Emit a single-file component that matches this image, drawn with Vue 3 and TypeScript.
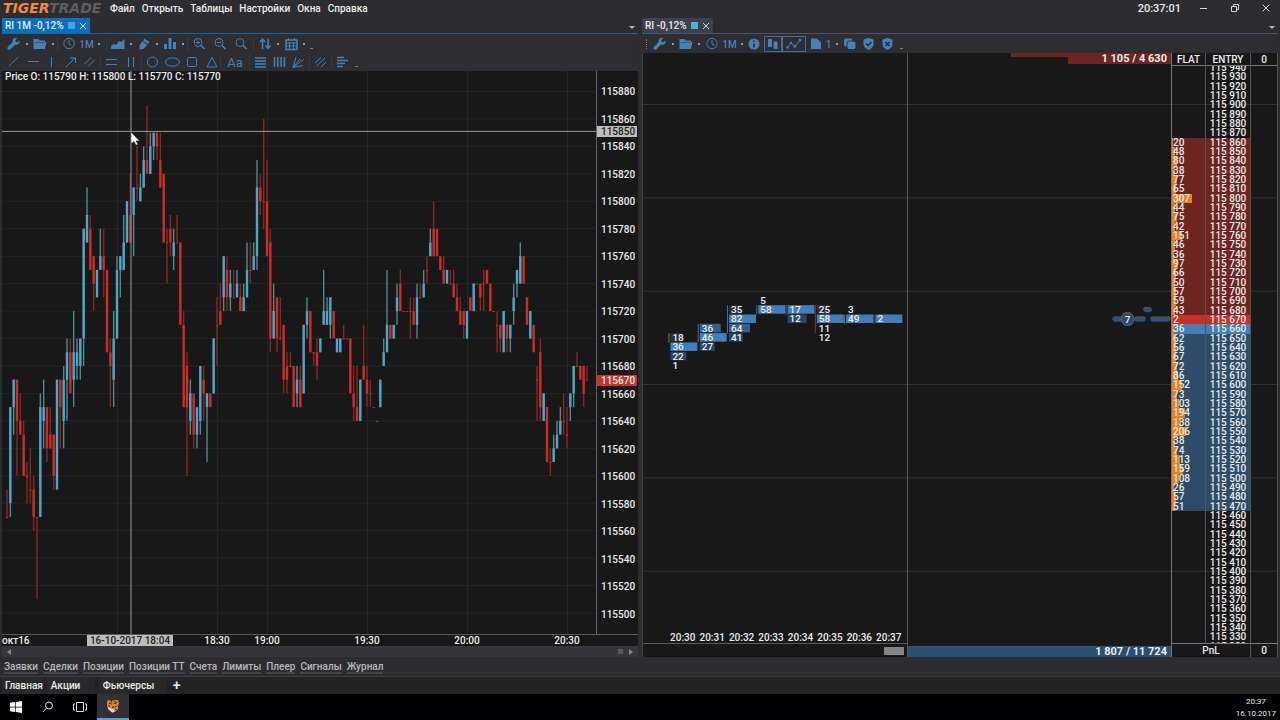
<script setup lang="ts">
type Candle = [number, number, number, number, 'u' | 'd']

interface Tool {
  icon?: string
  label?: string
  text?: string
  drop?: boolean
  sep?: boolean
  kind?: string
}

const menu = ['Файл', 'Открыть', 'Таблицы', 'Настройки', 'Окна', 'Справка']
const panels = ['Заявки', 'Сделки', 'Позиции', 'Позиции ТТ', 'Счета', 'Лимиты', 'Плеер', 'Сигналы', 'Журнал']

const icons: Record<string, string> = {
  wrench: '<path class="f" d="M13.500 4.200l-2 2-1.800-.4-.4-1.800 2-2C9.400 1.300 7.300 2 6.700 3.800c-.3.8-.2 1.500 0 2.200L2 10.800c-.8.800-.8 1.800-.1 2.500.8.8 1.800.7 2.500-.1L9.200 8.500c2.500.9 5.200-1.300 4.300-4.300z"/>',
  folder: '<path class="f" d="M1.500 13V3h5l1 1.500H13V6h1.500L13 13z"/><path d="M3 6.500h10" style="stroke:#2d2d32;stroke-width:.5"/>',
  clock: '<circle cx="8" cy="7.500" r="5.200"/><path d="M8 4v4l2.500 1.500"/>',
  area: '<path class="f" d="M1 13V9.500l3-1.500 2 1 3-4 2 1 3.500-3V13z"/>',
  pencil: '<path class="f" d="M8.500 2.500l5 3.500-1.500 2-5-3.500zM6.300 5.300l5 3.500L7.500 13l-4 .5.3-4.500z"/>',
  bars: '<path class="f" d="M2 8h3v5H2zM6.500 2h3v11h-3zM11 6h3v7h-3z"/>',
  zoomin: '<circle cx="7" cy="6.500" r="4"/><path class="b" d="M10 9.500l3.500 3.500"/><path d="M5 6.500h4M7 4.500v4"/>',
  zoomout: '<circle cx="7" cy="6.500" r="4"/><path class="b" d="M10 9.500l3.500 3.500"/><path d="M5 6.500h4"/>',
  zoom: '<circle cx="7" cy="6.500" r="4"/><path class="b" d="M10 9.500l3.500 3.500"/>',
  arrows: '<path class="b" d="M5.500 13V3.500M3 6l2.500-3L8 6M11 2.500V12M8.500 9.500L11 12.500l2.500-3"/>',
  calendar: '<path class="b" d="M3 4h11v9.500H3z"/><path d="M3 7h11M3 10h11M6.500 6v7M10.500 6v7M5.500 2v2M11.500 2v2"/>',
  line: '<path d="M3 12L12.500 3"/>',
  hline: '<path d="M3 7.500h11"/>',
  vline: '<path d="M7.500 3v10"/>',
  ray: '<path d="M3 13l9-9M7 4h5.500v5"/>',
  channel: '<path d="M2.500 10L9 3.500M6 12.500l7-7"/>',
  hpair: '<path d="M2 5.500h11M2 10.500h11"/>',
  vpair: '<path d="M5.500 3v10M10.500 3v10"/>',
  circle: '<circle cx="7.500" cy="8" r="5"/>',
  ellipse: '<ellipse cx="8.500" cy="8" rx="7" ry="4.200"/>',
  square: '<rect x="4.500" y="3.500" width="9" height="9" rx="1"/>',
  triangle: '<path d="M10 3.500l5 9.500H5z"/>',
  hlines: '<path class="b" d="M2 4h11M2 7h11M2 10h11M2 13h11"/>',
  vlines: '<path class="b" d="M2.500 3v10M5.800 3v10M9.100 3v10M12.400 3v10"/>',
  fan: '<path d="M2 13.500L5 3M2 13.500L9 5M2 13.500L12.500 5.500M2 13.500l10-2"/>',
  slashes: '<path d="M2 9l6-5.500M3.500 12L12 4M8 13l5-5"/>',
  align: '<path class="b" d="M2 3.500h7M2 6.500h11M2 9.500h8M2 12.500h6"/>',
  info: '<circle class="f" cx="7" cy="8" r="5.500"/><path class="k" d="M7 7.500v4M7 4.500v1.500"/>',
  clusters: '<path class="f" d="M3 3h4v8H3zM8.500 5.500h4V13h-4z"/>',
  polyline: '<path d="M1 12l4-5 4 3.500L14.500 3.500"/><circle class="f" cx="1.500" cy="11.500" r="1.300"/><circle class="f" cx="5" cy="7" r="1.300"/><circle class="f" cx="9" cy="10.500" r="1.300"/><circle class="f" cx="14" cy="4" r="1.300"/>',
  page: '<path class="f" d="M3 2.500h6l4 4V13H3z"/>',
  copy: '<rect class="f" x="2" y="2.500" width="8.500" height="8" rx="2"/><rect class="f e" x="5" y="5" width="9" height="8.500" rx="2"/>',
  shield: '<path class="f" d="M7.500 2l5 1.500V8c0 3-2 4.500-5 6-3-1.500-5-3-5-6V3.500z"/><path class="k" d="M5 7.500l2 2 3.500-3.500"/>',
  shieldx: '<path class="f" d="M7.500 2l5 1.500V8c0 3-2 4.500-5 6-3-1.500-5-3-5-6V3.500z"/><path class="k" d="M5.500 6l4 4M9.500 6l-4 4"/>',
}

const mainTools: Tool[] = [
  { icon: 'wrench', label: 'Параметры', drop: true },
  { icon: 'folder', label: 'Шаблоны', drop: true },
  { sep: true },
  { icon: 'clock', label: 'Период', text: '1M', drop: true, kind: 'period' },
  { sep: true },
  { icon: 'area', label: 'Тип графика', drop: true },
  { icon: 'pencil', label: 'Рисование', drop: true },
  { icon: 'bars', label: 'Индикаторы', drop: true },
  { sep: true },
  { icon: 'zoomin', label: 'Увеличить', kind: 'wide' },
  { icon: 'zoomout', label: 'Уменьшить', kind: 'wide' },
  { icon: 'zoom', label: 'Масштаб', kind: 'wide' },
  { sep: true },
  { icon: 'arrows', label: 'Шкала', drop: true },
  { icon: 'calendar', label: 'Календарь', drop: true },
]
const drawTools: Tool[] = [
  { icon: 'line', label: 'Линия' },
  { icon: 'hline', label: 'Горизонтальная линия' },
  { icon: 'vline', label: 'Вертикальная линия' },
  { icon: 'ray', label: 'Луч' },
  { icon: 'channel', label: 'Канал' },
  { sep: true },
  { icon: 'hpair', label: 'Горизонтальный диапазон' },
  { icon: 'vpair', label: 'Вертикальный диапазон' },
  { sep: true },
  { icon: 'circle', label: 'Круг' },
  { icon: 'ellipse', label: 'Эллипс' },
  { icon: 'square', label: 'Прямоугольник' },
  { icon: 'triangle', label: 'Треугольник' },
  { sep: true },
  { text: 'Aa', label: 'Текст', kind: 'letters' },
  { sep: true },
  { icon: 'hlines', label: 'Уровни' },
  { icon: 'vlines', label: 'Временные зоны' },
  { icon: 'fan', label: 'Веер' },
  { sep: true },
  { icon: 'slashes', label: 'Вилы' },
  { sep: true },
  { icon: 'align', label: 'Профиль' },
]
const domTools: Tool[] = [
  { icon: 'wrench', label: 'Параметры', drop: true },
  { icon: 'folder', label: 'Шаблоны', drop: true },
  { icon: 'clock', label: 'Период', text: '1M', drop: true, kind: 'period' },
  { icon: 'info', label: 'Информация' },
  { icon: 'clusters', label: 'Кластеры', kind: 'pressed' },
  { icon: 'polyline', label: 'Тики', kind: 'pressed wide' },
  { icon: 'page', label: 'Объём', text: '1', drop: true, kind: 'tight' },
  { icon: 'copy', label: 'Копировать' },
  { icon: 'shield', label: 'Защита' },
  { icon: 'shieldx', label: 'Снять защиту' },
]

/* high, body top, body bottom, low: steps of 10 points below 115880 */
const candles: Candle[] = [
  [29, 31, 31, 31, 'd'], [23, 23, 30, 31, 'u'], [21, 21, 23, 25, 'u'], [21, 21, 24, 28, 'd'], [22, 24, 25, 25, 'd'],
  [24, 25, 28, 28, 'd'], [27, 28, 28, 30, 'd'], [26, 29, 29, 30, 'd'], [28, 29, 31, 32, 'd'], [31, 31, 31, 37, 'd'],
  [22, 23, 31, 31, 'u'], [21, 23, 24, 26, 'u'], [23, 23, 26, 27, 'd'], [23, 25, 26, 26, 'd'], [25, 25, 28, 29, 'd'],
  [21, 21, 29, 29, 'u'], [21, 21, 23, 26, 'd'], [20, 21, 24, 26, 'u'], [18, 19, 21, 24, 'u'], [18, 19, 22, 22, 'd'],
  [16, 19, 21, 23, 'u'], [18, 19, 20, 21, 'u'], [18, 18, 20, 21, 'u'], [10, 10, 18, 20, 'u'], [7, 9, 11, 11, 'u'],
  [9, 10, 13, 13, 'd'], [12, 12, 14, 16, 'd'], [13, 13, 15, 15, 'u'], [10, 12, 13, 13, 'u'], [10, 12, 13, 15, 'd'],
  [13, 13, 19, 19, 'd'], [18, 19, 20, 23, 'd'], [16, 18, 21, 23, 'u'], [12, 13, 18, 18, 'u'], [12, 12, 13, 15, 'u'],
  [9, 11, 13, 13, 'u'], [8, 8, 11, 11, 'u'], [6, 9, 11, 11, 'd'], [7, 7, 9, 12, 'u'], [4, 7, 7, 8, 'd'],
  [6, 7, 8, 8, 'u'], [4, 5, 7, 7, 'u'], [1, 5, 6, 6, 'd'], [3, 4, 6, 6, 'u'], [3, 3, 4, 5, 'u'],
  [3, 3, 4, 5, 'd'], [3, 5, 7, 7, 'd'], [6, 6, 11, 11, 'd'], [10, 11, 11, 14, 'd'], [9, 10, 11, 12, 'd'],
  [10, 11, 12, 13, 'u'], [9, 11, 11, 11, 'd'], [11, 11, 17, 17, 'd'], [16, 17, 23, 23, 'd'], [19, 20, 23, 28, 'd'],
  [21, 22, 24, 25, 'u'], [22, 22, 25, 26, 'd'], [23, 23, 25, 26, 'u'], [20, 20, 24, 25, 'u'], [20, 21, 22, 24, 'd'],
  [22, 22, 23, 27, 'u'], [22, 22, 23, 23, 'd'], [18, 18, 22, 22, 'u'], [15, 17, 17, 20, 'd'], [14, 16, 17, 17, 'd'],
  [12, 12, 15, 16, 'u'], [12, 13, 15, 16, 'd'], [13, 14, 15, 16, 'u'], [13, 15, 15, 15, 'd'], [13, 14, 15, 15, 'u'],
  [14, 15, 16, 16, 'd'], [14, 15, 16, 16, 'u'], [11, 13, 15, 15, 'u'], [11, 13, 13, 14, 'd'], [11, 12, 13, 13, 'u'],
  [5, 7, 12, 13, 'u'], [6, 7, 8, 9, 'd'], [2, 8, 8, 10, 'd'], [5, 8, 12, 12, 'd'], [10, 11, 18, 19, 'd'],
  [14, 16, 18, 18, 'u'], [15, 15, 18, 19, 'd'], [15, 18, 18, 18, 'd'], [17, 17, 21, 22, 'd'], [19, 20, 21, 22, 'd'],
  [19, 20, 20, 20, 'd'], [20, 20, 23, 23, 'd'], [20, 21, 22, 23, 'u'], [20, 21, 23, 23, 'd'], [17, 17, 22, 22, 'u'],
  [15, 16, 17, 18, 'u'], [16, 16, 19, 19, 'd'], [19, 19, 19, 20, 'd'], [18, 19, 20, 21, 'd'], [18, 18, 19, 19, 'u'],
  [13, 16, 17, 17, 'u'], [15, 16, 17, 17, 'u'], [15, 15, 17, 18, 'u'], [16, 16, 18, 18, 'd'], [18, 18, 19, 19, 'u'],
  [18, 18, 19, 19, 'u'], [17, 18, 18, 18, 'd'], [18, 18, 18, 18, 'd'], [18, 18, 22, 22, 'd'], [20, 22, 23, 24, 'd'],
  [20, 23, 24, 24, 'd'], [21, 21, 24, 24, 'u'], [17, 20, 21, 21, 'd'], [20, 21, 22, 23, 'd'], [21, 22, 22, 23, 'd'],
  [23, 23, 23, 23, 'd'], [24, 24, 24, 24, 'd'], [21, 21, 23, 23, 'u'], [18, 19, 20, 20, 'u'], [13, 17, 19, 19, 'u'],
  [17, 17, 18, 18, 'd'], [17, 17, 18, 18, 'u'], [14, 15, 16, 17, 'u'], [13, 14, 16, 16, 'd'], [16, 16, 16, 16, 'd'],
  [16, 16, 16, 16, 'd'], [15, 16, 16, 18, 'd'], [15, 16, 17, 17, 'd'], [14, 15, 17, 18, 'u'], [14, 15, 15, 15, 'd'],
  [13, 14, 15, 15, 'u'], [12, 13, 13, 14, 'd'], [10, 11, 12, 12, 'u'], [8, 10, 12, 12, 'd'], [10, 10, 12, 12, 'd'],
  [12, 12, 13, 13, 'd'], [12, 13, 14, 14, 'd'], [13, 13, 14, 14, 'u'], [13, 14, 14, 14, 'd'], [13, 14, 15, 15, 'd'],
  [14, 15, 16, 16, 'd'], [15, 16, 17, 17, 'd'], [16, 16, 17, 18, 'd'], [16, 16, 18, 18, 'u'], [15, 15, 16, 16, 'd'],
  [14, 14, 16, 16, 'u'], [14, 14, 14, 14, 'd'], [14, 14, 15, 16, 'd'], [13, 14, 14, 16, 'd'], [13, 13, 14, 14, 'd'],
  [14, 14, 16, 16, 'd'], [16, 16, 16, 16, 'd'], [16, 17, 17, 19, 'd'], [17, 17, 18, 19, 'd'], [16, 16, 19, 19, 'u'],
  [17, 17, 18, 19, 'd'], [17, 17, 18, 19, 'u'], [14, 15, 16, 17, 'u'], [13, 13, 14, 15, 'u'], [11, 12, 14, 14, 'u'],
  [12, 12, 14, 14, 'd'], [15, 15, 17, 17, 'd'], [16, 16, 18, 18, 'u'], [17, 17, 19, 19, 'd'], [20, 21, 21, 24, 'd'],
  [18, 19, 23, 24, 'd'], [22, 22, 24, 24, 'u'], [23, 23, 27, 27, 'd'], [26, 27, 27, 28, 'd'], [25, 26, 27, 27, 'u'],
  [24, 25, 26, 26, 'u'], [23, 24, 25, 25, 'u'], [22, 24, 24, 25, 'd'], [23, 25, 25, 26, 'd'], [22, 22, 23, 24, 'u'],
  [20, 20, 22, 23, 'u'], [19, 20, 20, 20, 'd'], [20, 20, 21, 21, 'd'], [20, 20, 22, 23, 'd'], [20, 21, 21, 21, 'd'],
]
const cx = (i: number) => 4.5 + (i * 10) / 3
const cy = (k: number) => 20.5 + k * 13.75
const bodyHeight = (c: Candle) => Math.max(1, (c[2] - c[1]) * 13.75)

const prices = Array.from({ length: 20 }, (_, i) => 115880 - i * 20)
const ticks = [115, 215, 265, 365, 465, 565]
const times = [
  { x: 215, t: '18:30' }, { x: 265, t: '19:00' }, { x: 365, t: '19:30' }, { x: 465, t: '20:00' }, { x: 565, t: '20:30' },
]
const minutes = ['20:30', '20:31', '20:32', '20:33', '20:34', '20:35', '20:36', '20:37']

const sell = [20, 48, 80, 38, 77, 65, 307, 44, 75, 42, 151, 46, 36, 97, 66, 50, 57, 59, 43, 2]
const buy = [36, 62, 56, 67, 72, 86, 152, 73, 103, 194, 138, 206, 38, 74, 113, 159, 108, 26, 57, 51]
const depth = Array.from({ length: 63 }, (_, i) => {
  const p = 115940 - i * 10
  const s = sell[i - 8]
  const b = buy[i - 28]
  const side = p === 115670 ? 'last-sell' : p === 115660 ? 'last-buy' : s ? 'sell' : b ? 'buy' : ''
  return { price: `115 ${p - 115000}`, vol: s ?? b ?? null, side }
})

/* column, row (10-point step below 115940), volume, bar width, shade */
const clusters: [number, number, number, number, string][] = [
  [0, 29, 18, 13, 'c1'], [0, 30, 36, 27, 'c4'], [0, 31, 22, 16, 'c2'], [0, 32, 1, 0, 'c1'],
  [1, 28, 36, 21, 'c3'], [1, 29, 46, 27, 'c4'], [1, 30, 27, 15, 'c2'],
  [2, 26, 35, 12, 'c1'], [2, 27, 82, 27, 'c4'], [2, 28, 64, 21, 'c3'], [2, 29, 41, 14, 'c2'],
  [3, 25, 5, 0, 'c1'], [3, 26, 58, 27, 'c4'],
  [4, 26, 17, 27, 'c4'], [4, 27, 12, 19, 'c2'],
  [5, 26, 25, 12, 'c1'], [5, 27, 58, 27, 'c4'], [5, 28, 11, 0, 'c1'], [5, 29, 12, 0, 'c1'],
  [6, 26, 3, 0, 'c1'], [6, 27, 49, 27, 'c4'], [7, 27, 2, 27, 'c4'],
]
const ranges: [number, number, number, string][] = [
  [0, 29, 1, 'grey'], [1, 28, 2, 'blue'], [2, 26, 3, 'blue'], [3, 26, 1, 'blue'],
  [4, 26, 1, 'blue'], [5, 26, 3, 'red'], [6, 27, 1, 'blue'], [7, 27, 1, 'blue'],
]
const colX = (c: number) => 27.5 + (c * 88) / 3
const rowY = (r: number) => 10 + (r * 28) / 3
const hundreds = [0, 1, 2, 3, 4, 5].map((n) => 51.5 + (n * 280) / 3)
const deals: [number, number][] = [
  [1, 472], [1, 475], [1, 478], [1, 494], [1, 497], [1, 500], [0, 503], [0, 506],
  [1, 510], [1, 513], [1, 516], [1, 519], [1, 522], [1, 525],
]
</script>

<template>
  <div class="app">
    <header class="menubar">
      <div class="logo"><span class="tiger">TIGER</span><span class="trade">TRADE</span></div>
      <nav class="menu">
        <button v-for="m in menu" :key="m" type="button">{{ m }}</button>
      </nav>
      <time class="clock">20:37:01</time>
      <div class="winbtns">
        <button type="button" aria-label="Свернуть"><svg width="10" height="10"><path d="M1 5.500h7" /></svg></button>
        <button type="button" aria-label="Развернуть"><svg width="10" height="10"><path d="M1.500 3.500h5v5h-5zM3.500 3V1.500h5v5H7" /></svg></button>
        <button type="button" aria-label="Закрыть"><svg width="10" height="10"><path d="M1.500 1.500l7 7M8.500 1.500l-7 7" /></svg></button>
      </div>
    </header>

    <main class="panes">
      <section class="pane left">
        <div class="tabs active">
          <button class="tab" type="button">RI 1M -0,12%<i class="chip"></i><svg width="8" height="8"><path d="M1 1l6 6M7 1L1 7" /></svg></button>
          <span class="caret"></span>
        </div>
        <div class="toolbars">
          <div v-for="(row, r) in [mainTools, drawTools]" :key="r" class="toolbar">
            <template v-for="(t, i) in row" :key="i">
              <span v-if="t.sep" class="sep"></span>
              <button v-else type="button" class="tool" :class="t.kind" :aria-label="t.label">
                <svg v-if="t.icon" class="ico" width="16" height="16" v-html="icons[t.icon]"></svg>
                <span v-if="t.text" class="ttext">{{ t.text }}</span>
                <i v-if="t.drop" class="drop"></i>
              </button>
            </template>
            <span class="more"></span>
          </div>
        </div>
        <div class="chart">
          <div class="plot">
            <svg viewBox="0 0 594 564" preserveAspectRatio="none">
              <path v-for="(p, i) in prices" :key="'h' + p" class="grid" :d="`M0 ${20.5 + i * 27.5}H594`" />
              <path v-for="x in ticks" :key="'v' + x" class="grid" :d="`M${x + 0.5} 0V564`" />
              <g v-for="(c, i) in candles" :key="i" :class="c[4]">
                <rect class="wick" :x="cx(i) - 0.2" :y="cy(c[0])" width="1.4" :height="(c[3] - c[0]) * 13.75" />
                <rect class="body" :x="cx(i) - 0.7" :y="cy(c[1])" width="2.4" :height="bodyHeight(c)" />
              </g>
              <path class="cross" d="M0 60.500H594M129 0V564" />
              <path class="pointer" d="M129 61v12l3-2.500 2 4 2-1-2-3.500h3.500z" />
            </svg>
            <p class="ohlc">Price O: 115790 H: 115800 L: 115770 C: 115770</p>
          </div>
          <div class="scale">
            <span v-for="p in prices" :key="p">{{ p }}</span>
            <b class="mark hover">115850</b>
            <b class="mark last">115670</b>
          </div>
        </div>
        <div class="timeaxis">
          <span class="day">окт16</span>
          <span v-for="t in times" :key="t.t" class="time" :style="{ left: (t.x / 636) * 100 + '%' }">{{ t.t }}</span>
          <b class="stamp">16-10-2017 18:04</b>
        </div>
        <div class="scroll">
          <button type="button" aria-label="Назад"><svg width="8" height="8"><path d="M6 1v6L2 4z" /></svg></button>
          <span class="fill"></span>
          <i class="grab"></i>
          <button type="button" aria-label="Вперёд"><svg width="8" height="8"><path d="M2 1v6l4-3z" /></svg></button>
        </div>
      </section>

      <section class="pane right">
        <div class="tabs">
          <button class="tab" type="button">RI -0,12%<i class="chip"></i><svg width="8" height="8"><path d="M1 1l6 6M7 1L1 7" /></svg></button>
          <span class="caret"></span>
        </div>
        <div class="toolbars">
          <div class="toolbar">
            <span class="grip"></span>
            <button v-for="t in domTools" :key="t.label" type="button" class="tool" :class="t.kind" :aria-label="t.label">
              <svg class="ico" width="16" height="16" v-html="icons[t.icon!]"></svg>
              <span v-if="t.text" class="ttext">{{ t.text }}</span>
              <i v-if="t.drop" class="drop"></i>
            </button>
            <span class="more"></span>
          </div>
        </div>
        <div class="trading">
          <svg class="levels" viewBox="0 0 636 604" preserveAspectRatio="none">
            <path v-for="y in hundreds" :key="y" :d="`M0 ${y}H636`" />
          </svg>
          <div class="clusters">
            <svg viewBox="0 0 264 579" preserveAspectRatio="xMinYMin meet">
              <rect v-for="(g, i) in ranges" :key="'r' + i" :class="g[3]" :x="colX(g[0]) - 2" :y="rowY(g[1])" width="1" :height="(g[2] * 28) / 3" />
              <g v-for="(c, i) in clusters" :key="i">
                <rect :class="c[4]" :x="colX(c[0])" :y="rowY(c[1])" :width="c[3]" height="8.500" />
                <text :x="colX(c[0]) + 2" :y="rowY(c[1]) + 8">{{ c[2] }}</text>
              </g>
            </svg>
            <div class="minutes"><span v-for="m in minutes" :key="m">{{ m }}</span></div>
            <div class="thumbrow"><i></i></div>
          </div>
          <div class="tape">
            <div class="total ask"><i></i><b>1 105 / 4 630</b></div>
            <svg viewBox="264 0 264 579" preserveAspectRatio="xMaxYMin meet">
              <circle v-for="(d, i) in deals" :key="i" class="deal" :cx="d[1] - 0.5" :cy="d[0] ? 254.5 : 245" r="2.500" />
              <circle class="big" cx="484" cy="254.500" r="6.500" />
              <text x="484" y="258" text-anchor="middle">7</text>
            </svg>
            <div class="total bid"><b>1 807 / 11 724</b></div>
          </div>
          <table class="dom">
            <thead>
              <tr><th>FLAT</th><th>ENTRY</th><th>0</th></tr>
            </thead>
            <tbody>
              <tr v-for="d in depth" :key="d.price" :class="d.side">
                <td class="vol"><i v-if="d.vol" :style="{ width: Math.max(1, Math.round(d.vol / 15)) + 'px' }"></i><span>{{ d.vol }}</span></td>
                <td class="price">{{ d.price }}</td>
                <td class="own"></td>
              </tr>
            </tbody>
            <tfoot>
              <tr><td class="pnl">PnL</td><td>0</td></tr>
            </tfoot>
          </table>
        </div>
      </section>
    </main>

    <nav class="panels">
      <button v-for="p in panels" :key="p" type="button">{{ p }}</button>
    </nav>
    <nav class="sheets">
      <button type="button" class="first">Главная</button>
      <button type="button" class="mid">Акции</button>
      <button type="button" class="long">Фьючерсы</button>
      <button type="button" class="add" aria-label="Добавить">+</button>
    </nav>
    <footer class="taskbar">
      <button type="button" aria-label="Пуск"><svg width="12" height="12"><path class="s" d="M0 1.800l5-.8v4.700H0zM5.700.9L12 0v5.700H5.700zM0 6.400h5V11l-5-.8zM5.700 6.400H12V12l-6.300-.9z" /></svg></button>
      <button type="button" aria-label="Поиск"><svg width="12" height="12"><circle cx="7" cy="4.500" r="3.500" /><path d="M4.500 7L1 11" /></svg></button>
      <button type="button" aria-label="Представление задач"><svg width="14" height="12"><path d="M3.500 1.500h7v9h-7zM2 3H.5v6H2M12 3h1.500v6H12" /></svg></button>
      <button type="button" class="running" aria-label="Tiger Trade">
        <svg width="14" height="14">
          <path class="t1" d="M1 2l2-1 2 1 4-1h3l1 3-1 3v3l-3 3-2-1-4-2-2-3z" />
          <path class="t2" d="M1.500 7.500l2 0 1 2 3 1 1 2-1 1H6L2.500 10.500z" />
          <path class="t3" d="M3 4l2.500 1M8 4.500l3-1M5 2l1 1.500M9 2v1M2 6.500l2 1.500M11 6.500l-2 2M7.500 7l-1 2M9 10l1.500 1" />
        </svg>
      </button>
      <div class="tray"><span>20:37</span><span>16.10.2017</span></div>
    </footer>
  </div>
</template>

<style>
html, body { background: #2d2d31; }
</style>

<style scoped>
.app {
  display: flex;
  flex-direction: column;
  min-height: 100vh;
  overflow: hidden;
  background: #2d2d31;
  color: #ececec;
  font: 500 10px/11px Roboto, "Noto Sans", sans-serif;
}
.app * { box-sizing: border-box; }
button {
  margin: 0;
  padding: 0;
  border: 0;
  background: none;
  color: inherit;
  font: inherit;
  white-space: nowrap;
}
svg { display: block; flex: none; }

.menubar { display: flex; align-items: center; height: 18px; padding: 0 8px 2px 3px; }
.logo { width: 107px; font: italic bold 14px/14px "DejaVu Sans", sans-serif; }
.tiger { color: #ee8b45; }
.trade { color: #5f5f63; }
.menu { display: flex; flex: 1; gap: 7px; }
.clock { margin-right: 18px; font-size: 11px; }
.winbtns { display: flex; gap: 21px; margin-right: 1px; }
.winbtns svg, .tab svg { fill: none; stroke: #d8d8d8; stroke-width: 1; }

.panes { display: flex; flex: 1; gap: 4px; padding-right: 2px; }
.pane { display: flex; flex: 1 1 0; flex-direction: column; min-width: 0; }
.left { padding-left: 2px; }
.tabs { display: flex; justify-content: space-between; height: 16px; border-bottom: 1px solid #48546a; }
.tabs.active { border-color: #0d68a8; }
.tab { display: flex; align-items: center; gap: 2px; padding: 0 3px; background: #3c4152; border-radius: 2px 2px 0 0; }
.active .tab { background: #0b6fc0; border-radius: 0; }
.chip { width: 7px; height: 7px; margin: 0 2px; background: #4eb3d0; }
.active .chip { background: #48a0e4; }
.caret { align-self: flex-end; margin: 0 3px 4px 0; border: 3px solid transparent; border-top-color: #bbb; border-bottom: 0; }

.toolbars { padding-top: 1px; background: #2d2d32; }
.toolbar { display: flex; align-items: center; height: 18px; padding-left: 2px; color: #4482b8; }
.right .toolbar { padding-left: 0; }
.tool { display: flex; align-items: center; justify-content: center; height: 16px; }
.tool .ico { width: 16px; margin: 0 1px 0 2px; }
.tool.wide .ico { margin: 0 3px 0 2px; }
.tool.pressed { border: 1px solid #466c9c; }
.tool.pressed .ico { margin: 0; }
.tool.pressed.wide .ico { margin: 0 3px; }
.tool.tight .ico { margin-right: 0; }
.letters { width: 26px; font-size: 13px; font-weight: 400; }
.ttext { min-width: 9px; text-align: center; }
.period .ttext { width: 17px; }
.drop { width: 2px; height: 2px; margin: 0 2px 0 3px; background: #a09a90; }
.left .period .drop { margin-right: 5px; }
.sep { width: 1px; height: 14px; margin: 0 1px; background: #39393e; }
.more { width: 3px; height: 1px; margin: 8px 0 0 3px; background: #777; }
.grip { width: 2px; margin: 0 2px 0 4px; height: 10px; border-left: 1px dotted #777; }
.ico { fill: none; stroke: currentColor; stroke-width: 1; }
.ico :deep(.f) { fill: currentColor; stroke: none; }
.ico :deep(.b) { stroke-width: 1.5; }
.ico :deep(.k) { stroke: #1f2c3a; stroke-width: 1.5; }
.ico :deep(.e) { stroke: #2d2d32; }

.chart { display: flex; flex: 1; border-bottom: 1px solid #5a5a5a; background: #181818; }
.plot { position: relative; flex: 1; }
.plot svg { position: absolute; inset: 0; width: 100%; height: 100%; }
.grid { fill: none; stroke: #242424; }
.u .wick { fill: #4d8b8f; }
.u .body { fill: #4fa6c6; }
.d .wick { fill: #8c2522; }
.d .body { fill: #c92f26; }
.cross { fill: none; stroke: #9a9a9a; }
.pointer { fill: #fff; stroke: #222; stroke-width: 0.5; }
.ohlc { position: relative; margin: 0 0 0 3px; }
.scale {
  position: relative;
  display: grid;
  grid-auto-rows: 1fr;
  align-items: center;
  width: 42px;
  padding: 7px 0 6px 4px;
  border-left: 1px solid #666;
}
.mark { position: absolute; left: 0; right: 1px; padding-left: 4px; font-weight: 500; }
.hover { top: 55px; background: #bdbdbd; color: #222; }
.last { top: 304px; background: #c5332a; }
.timeaxis { position: relative; height: 11px; background: #181818; }
.time { position: absolute; transform: translateX(-50%); }
.stamp { position: absolute; left: 85px; width: 86px; background: #bdbdbd; color: #222; text-align: center; font-weight: 500; }
.scroll { display: flex; align-items: center; gap: 4px; height: 11px; padding: 0 3px; background: #36363a; }
.scroll svg { fill: #888; }
.fill { flex: 1; }
.grab { width: 5px; height: 5px; background: #5a5a5e; }

.trading { position: relative; display: flex; flex: 1; background: #181818; border-left: 1px solid #444; }
.levels { position: absolute; inset: 0; width: 100%; height: 100%; fill: none; stroke: #303030; pointer-events: none; }
.clusters { position: relative; display: flex; flex: 1 1 0; flex-direction: column; border-right: 1px solid #5a5a5a; }
.clusters svg, .tape svg { flex: 1; width: 100%; min-height: 0; }
text { fill: #f0f0f0; font-size: 10px; font-weight: 500; }
.c1 { fill: #26313d; }
.c2 { fill: #2b4665; }
.c3 { fill: #35608c; }
.c4 { fill: #427fba; }
.grey { fill: #777; }
.blue { fill: #3a6ea5; }
.red { fill: #a22c26; }
.minutes { display: grid; grid-template-columns: repeat(8, 1fr); height: 11px; margin: 0 3px 0 25px; text-align: center; }
.thumbrow { display: flex; align-items: center; justify-content: flex-end; height: 14px; padding-right: 3px; border-top: 1px solid #5a5a5a; }
.thumbrow i { width: 20px; height: 8px; background: #858585; }
.tape { position: relative; display: flex; flex: 1 1 0; flex-direction: column; min-width: 0; }
.tape svg { margin-top: 1px; }
.total { position: relative; display: flex; justify-content: flex-end; height: 11px; padding-right: 4px; font-size: 11px; }
.ask { margin-left: 160px; background: #6e2420; }
.ask i { position: absolute; right: 100%; top: 0; width: 57px; height: 4px; background: #6e2420; }
.bid { background: #2c5072; }
.deal { fill: #2f4e6c; stroke: #47698c; stroke-width: 0.5; }
.big { fill: #2d4a66; stroke: #4a6f92; }

.dom { position: relative; display: flex; flex: none; flex-direction: column; width: 107px; border-left: 1px solid #777; overflow: hidden; border-spacing: 0; }
.dom tr { display: grid; grid-template-columns: 34px 45px 1fr; }
.dom th, .dom td { padding: 0; text-align: center; font-weight: 500; border-right: 1px solid #555; }
.dom thead, .dom tfoot { display: block; position: relative; z-index: 1; background: #181818; }
.dom thead { height: 13px; border-bottom: 1px solid #777; line-height: 13px; }
.dom tfoot { height: 14px; border-top: 1px solid #777; line-height: 13px; }
.dom tfoot tr { grid-template-columns: 79px 1fr; }
.dom tbody { display: grid; flex: 1; grid-auto-rows: 1fr; margin: -3px 0 -8px; line-height: 9px; }
.dom td.vol { position: relative; text-align: left; }
.vol i { position: absolute; inset: 0 auto 0 0; background: #e8821c; }
.vol span { position: relative; padding-left: 1px; }
.sell .vol, .sell .price { background: #6e2420; }
.buy .vol, .buy .price { background: #2c4c69; }
.last-sell .vol, .last-sell .price { background: #c92f26; }
.last-buy .vol, .last-buy .price { background: #427fba; }
.last-sell .vol i { opacity: 0.5; }

.panels { display: flex; gap: 5px; height: 20px; padding: 3px 4px 0; border-bottom: 1px solid #3c3c40; color: #b8b8b8; }
.panels button { height: 14px; border-bottom: 2px solid #434347; }
.sheets { display: flex; gap: 4px; height: 17px; padding-left: 2px; background: #232324; }
.sheets button { padding: 0 0 1px 3px; background: #29292b; text-align: left; }
.sheets .first { min-width: 40px; }
.sheets .mid { width: 48px; padding-left: 4px; }
.sheets .long { width: 68px; padding-left: 4px; }
.sheets .add { padding: 0 2px; background: none; font-size: 14px; }
.taskbar { display: flex; align-items: stretch; height: 26px; background: #020204; }
.taskbar button { display: flex; align-items: center; justify-content: center; width: 32px; }
.taskbar .running { margin-left: 1px; background: #303035; border-bottom: 2px solid #5e9cd8; }
.taskbar svg { fill: none; stroke: #ddd; }
.taskbar .s { fill: #fff; stroke: none; }
.taskbar .t1 { fill: #d9813d; stroke: none; }
.taskbar .t2 { fill: #e6d9cc; stroke: none; }
.taskbar .t3 { stroke: #221a16; }
.tray { display: flex; flex-direction: column; align-items: center; justify-content: center; margin-left: auto; padding: 1px 4px 0 0; font-size: 8px; line-height: 12px; font-weight: 400; }
</style>
